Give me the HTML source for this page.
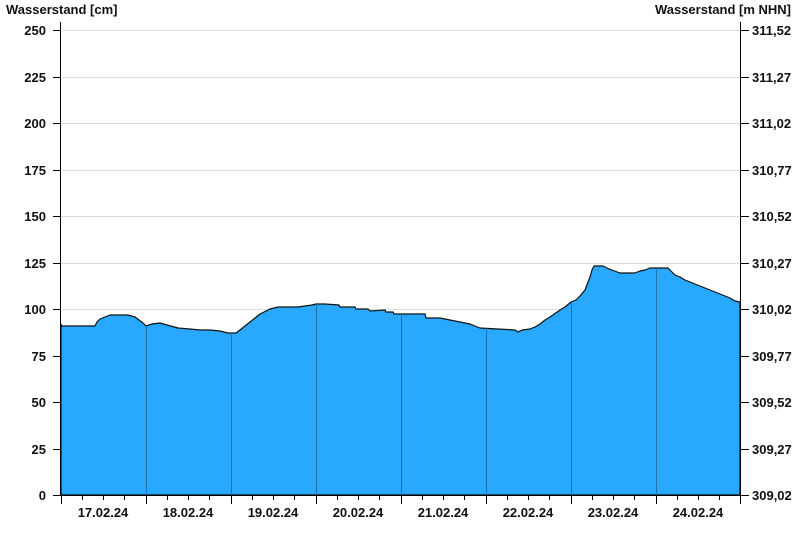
<!DOCTYPE html>
<html><head><meta charset="utf-8"><style>
html,body{margin:0;padding:0;background:#fff;width:800px;height:550px;overflow:hidden}
svg{display:block}
text{font-family:"Liberation Sans",Arial,sans-serif;font-weight:bold;font-size:13px;fill:#111}
</style></head><body>
<svg width="800" height="550" viewBox="0 0 800 550">
<text x="6" y="14">Wasserstand [cm]</text>
<text x="791" y="14" text-anchor="end">Wasserstand [m NHN]</text>
<g stroke="#dcdcdc" stroke-width="1">
<line x1="61" y1="30.5" x2="740" y2="30.5"/>
<line x1="61" y1="77.5" x2="740" y2="77.5"/>
<line x1="61" y1="123.5" x2="740" y2="123.5"/>
<line x1="61" y1="170.5" x2="740" y2="170.5"/>
<line x1="61" y1="216.5" x2="740" y2="216.5"/>
<line x1="61" y1="263.5" x2="740" y2="263.5"/>
<line x1="61" y1="309.5" x2="740" y2="309.5"/>
</g>
<path fill="#29a8ff" stroke="#111" stroke-width="1.2" stroke-linejoin="round" d="M61,324 L62,326 L95,326 L97,322 L100,319 L110,315 L128,315 L135,317 L143,323 L146,326 L152,324 L160,323 L167,325 L178,328 L190,329 L200,330 L210,330 L220,331 L228,333 L236,333 L240,330 L250,322 L260,314 L270,309 L278,307 L298,307 L305,306 L312,305 L316,304 L325,304 L339,305 L340,307 L355,307 L356,309 L368,309 L370,311 L385,310 L386,312 L393,312 L394,314 L425,314 L426,318 L440,318 L450,320 L460,322 L470,324 L480,328 L515,330 L518,332 L522,330 L530,329 L535,327 L540,324 L545,320 L550,317 L560,310 L565,307 L571,302 L576,300 L580,296 L585,290 L588,282 L590,277 L592,270 L594,266 L603,266 L607,268 L612,270 L620,273 L635,273 L640,271 L645,270 L650,268 L668,268 L671,271 L675,275 L680,277 L685,280 L690,282 L700,286 L710,290 L720,294 L730,298 L735,301 L740,302 L740,495 L61,495 Z"/>
<g stroke="#1f6fa8" stroke-width="1">
<line x1="146.5" y1="326" x2="146.5" y2="495"/>
<line x1="231.5" y1="332" x2="231.5" y2="495"/>
<line x1="316.5" y1="304" x2="316.5" y2="495"/>
<line x1="401.5" y1="314" x2="401.5" y2="495"/>
<line x1="486.5" y1="328" x2="486.5" y2="495"/>
<line x1="571.5" y1="302" x2="571.5" y2="495"/>
<line x1="656.5" y1="268" x2="656.5" y2="495"/>
</g>
<g stroke="#000" stroke-width="1">
<line x1="60.5" y1="22" x2="60.5" y2="496"/>
<line x1="740.5" y1="22" x2="740.5" y2="496"/>
<line x1="60" y1="495.5" x2="741" y2="495.5"/>
<path d="M53,30.5h8M53,77.5h8M53,123.5h8M53,170.5h8M53,216.5h8M53,263.5h8M53,309.5h8M53,356.5h8M53,402.5h8M53,449.5h8M53,495.5h8"/>
<path d="M741,30.5h8M741,77.5h8M741,123.5h8M741,170.5h8M741,216.5h8M741,263.5h8M741,309.5h8M741,356.5h8M741,402.5h8M741,449.5h8M741,495.5h8"/>
<path d="M61.5,495v9M146.5,495v9M231.5,495v9M316.5,495v9M401.5,495v9M486.5,495v9M571.5,495v9M656.5,495v9M740.5,495v9"/>
<path d="M82.5,495v5M103.5,495v5M124.5,495v5M167.5,495v5M188.5,495v5M209.5,495v5M252.5,495v5M273.5,495v5M294.5,495v5M337.5,495v5M358.5,495v5M379.5,495v5M422.5,495v5M443.5,495v5M464.5,495v5M507.5,495v5M528.5,495v5M549.5,495v5M592.5,495v5M613.5,495v5M634.5,495v5M677.5,495v5M698.5,495v5M719.5,495v5"/>
</g>
<g text-anchor="end">
<text x="46" y="35">250</text><text x="46" y="82">225</text><text x="46" y="128">200</text>
<text x="46" y="175">175</text><text x="46" y="221">150</text><text x="46" y="268">125</text>
<text x="46" y="314">100</text><text x="46" y="361">75</text><text x="46" y="407">50</text>
<text x="46" y="454">25</text><text x="46" y="500">0</text>
</g>
<g>
<text x="752" y="35">311,52</text><text x="752" y="82">311,27</text><text x="752" y="128">311,02</text>
<text x="752" y="175">310,77</text><text x="752" y="221">310,52</text><text x="752" y="268">310,27</text>
<text x="752" y="314">310,02</text><text x="752" y="361">309,77</text><text x="752" y="407">309,52</text>
<text x="752" y="454">309,27</text><text x="752" y="500">309,02</text>
</g>
<g text-anchor="middle">
<text x="103" y="517">17.02.24</text><text x="188" y="517">18.02.24</text><text x="273" y="517">19.02.24</text>
<text x="358" y="517">20.02.24</text><text x="443" y="517">21.02.24</text><text x="528" y="517">22.02.24</text>
<text x="613" y="517">23.02.24</text><text x="698" y="517">24.02.24</text>
</g>
</svg>
</body></html>
